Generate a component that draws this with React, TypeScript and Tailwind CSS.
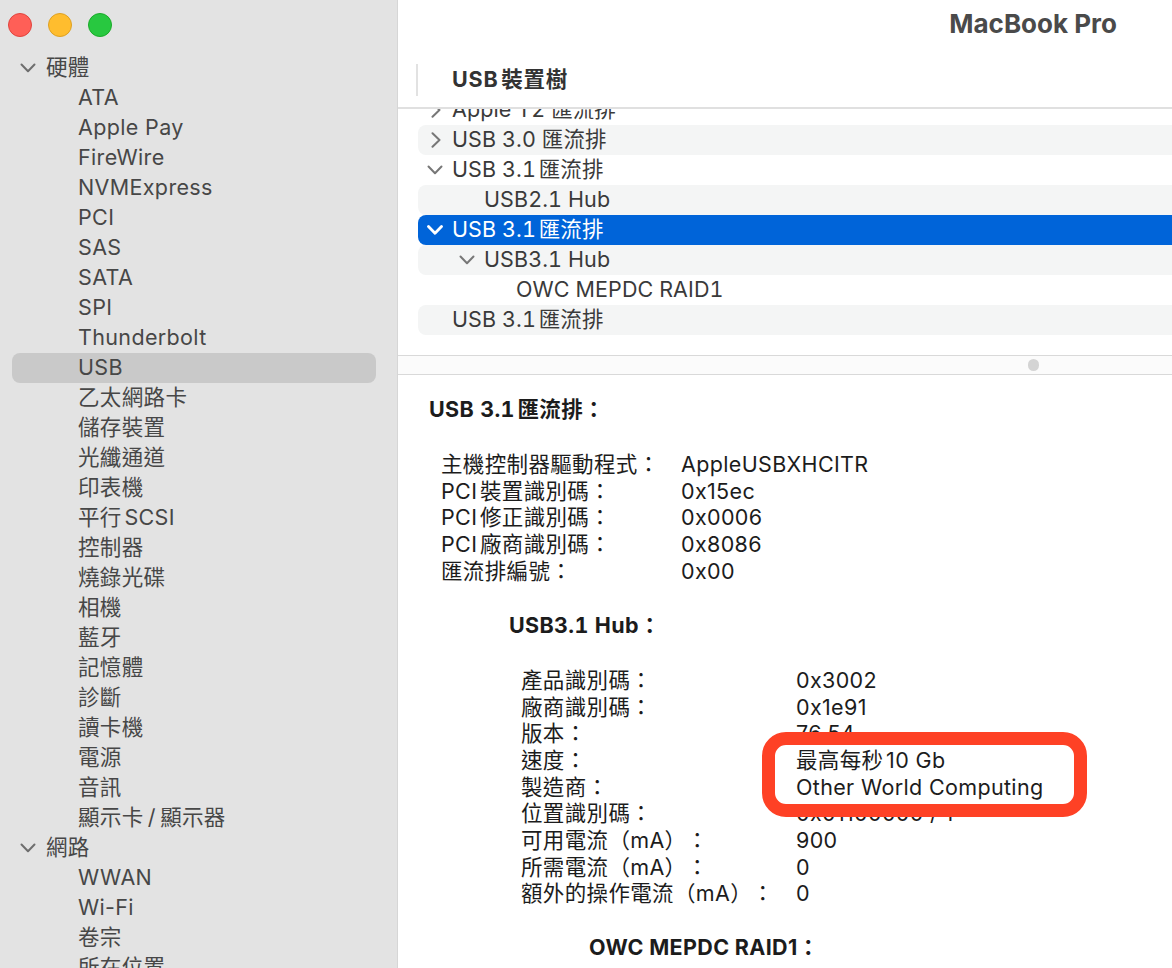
const FONT = "[font-family:Inter,'Noto_Sans_CJK_TC',sans-serif]";

const hardware = ['ATA', 'Apple Pay', 'FireWire', 'NVMExpress', 'PCI', 'SAS', 'SATA', 'SPI', 'Thunderbolt', 'USB', '乙太網路卡', '儲存裝置', '光纖通道', '印表機', '平行SCSI', '控制器', '燒錄光碟', '相機', '藍牙', '記憶體', '診斷', '讀卡機', '電源', '音訊', '顯示卡\u2009/\u2009顯示器'];
const network = ['WWAN', 'Wi-Fi', '卷宗', '所在位置'];

const treeRows = [
  { label: 'Apple T2 匯流排', level: 0, arrow: 'right' },
  { label: 'USB 3.0 匯流排', level: 0, arrow: 'right', stripe: true },
  { label: 'USB 3.1匯流排', level: 0, arrow: 'down' },
  { label: 'USB2.1 Hub', level: 1, stripe: true },
  { label: 'USB 3.1匯流排', level: 0, arrow: 'down', selected: true },
  { label: 'USB3.1 Hub', level: 1, arrow: 'down', stripe: true },
  { label: 'OWC MEPDC RAID1', level: 2 },
  { label: 'USB 3.1匯流排', level: 0, stripe: true },
];

const busInfo = [
  ['主機控制器驅動程式：', 'AppleUSBXHCITR'],
  ['PCI裝置識別碼：', '0x15ec'],
  ['PCI修正識別碼：', '0x0006'],
  ['PCI廠商識別碼：', '0x8086'],
  ['匯流排編號：', '0x00'],
];

const hubInfo = [
  ['產品識別碼：', '0x3002'],
  ['廠商識別碼：', '0x1e91'],
  ['版本：', '76.54'],
  ['速度：', '最高每秒10 Gb'],
  ['製造商：', 'Other World Computing'],
  ['位置識別碼：', '0x01100000 / 1'],
  ['可用電流（mA）：', '900'],
  ['所需電流（mA）：', '0'],
  ['額外的操作電流（mA）：', '0'],
];

function ChevronDown({ className }: { className: string }) {
  return (
    <svg viewBox="0 0 16 10" className={className} fill="none" stroke="currentColor" strokeWidth="2" strokeLinecap="round" strokeLinejoin="round">
      <path d="M1.5 1.5 8 8.2l6.5-6.7" />
    </svg>
  );
}

function ChevronRight({ className }: { className: string }) {
  return (
    <svg viewBox="0 0 10 16" className={className} fill="none" stroke="currentColor" strokeWidth="2" strokeLinecap="round" strokeLinejoin="round">
      <path d="M1.5 1.2 8.5 8l-7 6.8" />
    </svg>
  );
}

function SidebarGroup({ title, items }: { title: string; items: string[] }) {
  return (
    <>
      <div className="flex h-[30px] items-center pl-[20px] leading-[28px]">
        <ChevronDown className="h-[10px] w-[16px] text-[#6e6e6e]" />
        <span className="mb-[2px] ml-[10px]">{title}</span>
      </div>
      {items.map((item) => (
        <div
          key={item}
          className={`ml-[12px] mr-[21px] h-[30px] rounded-[8px] pl-[66px] leading-[28px] ${item === 'USB' ? 'bg-[#c9c9c9]' : ''}`}
        >
          {item}
        </div>
      ))}
    </>
  );
}

function TreeRow({ row }: { row: (typeof treeRows)[number] }) {
  const bg = row.selected ? 'bg-[#0064d9] text-white' : row.stripe ? 'bg-[#f4f5f5] text-[#3a3a3a]' : 'text-[#3a3a3a]';
  const indent = row.level === 2 ? 'pl-[64px]' : row.level === 1 ? 'pl-[32px]' : '';
  return (
    <div className={`flex h-[30px] items-center rounded-l-[8px] leading-[28px] ${bg} ${indent}`}>
      <div className={`flex w-[34px] shrink-0 items-center justify-center ${row.selected ? 'text-white [&_path]:[stroke-width:2.8]' : 'text-[#777777]'}`}>
        {row.arrow === 'down' && <ChevronDown className="h-[10px] w-[16px]" />}
        {row.arrow === 'right' && <ChevronRight className="ml-[2px] h-[16px] w-[10px]" />}
      </div>
      <span className="mb-[2px] tracking-[0.1px] tabular-nums">{row.label}</span>
    </div>
  );
}

function InfoRows({ rows, labelWidth }: { rows: string[][]; labelWidth: string }) {
  return (
    <div>
      {rows.map(([label, value]) => (
        <div key={label} className="flex h-[26.67px] items-center leading-[26.67px]">
          <div className={`shrink-0 ${labelWidth}`}>{label}</div>
          <div>{value}</div>
        </div>
      ))}
    </div>
  );
}

export default function App() {
  return (
    <div className={`flex h-[968px] w-[1172px] overflow-hidden bg-white text-[21.5px] tracking-[0.35px] [text-autospace:normal] [text-spacing-trim:space-all] ${FONT}`}>
      {/* Sidebar */}
      <aside className="h-full w-[398px] shrink-0 overflow-hidden border-r border-[#d6d6d6] bg-[#e3e3e3] text-[#474747]">
        <div className="flex h-[53px] items-start gap-[16px] pl-[8px] pt-[13px]">
          <div className="h-[24px] w-[24px] rounded-full border border-[#e0443e] bg-[#ff5f57]" />
          <div className="h-[24px] w-[24px] rounded-full border border-[#dea123] bg-[#ffbd2e]" />
          <div className="h-[24px] w-[24px] rounded-full border border-[#1aab29] bg-[#28c840]" />
        </div>
        <SidebarGroup title="硬體" items={hardware} />
        <SidebarGroup title="網路" items={network} />
      </aside>

      {/* Main */}
      <main className="relative min-w-0 flex-1">
        <div className="flex h-[53px] items-start justify-end pr-[55px]">
          <span className="text-[26px] font-bold leading-[48px] tracking-normal text-[#4a4a4a]">MacBook Pro</span>
        </div>
        <div className="flex h-[54px] items-center pl-[18px]">
          <div className="h-[32px] w-[2px] bg-[#e2e2e2]" />
          <span className="mb-[2px] ml-[34px] font-bold tracking-[0.8px] text-[#333333]">USB裝置樹</span>
        </div>
        <div className="h-[248px] overflow-hidden border-t-2 border-[#e0e0e0] pl-[20px]">
          <div className="-mt-[14px]">
            {treeRows.map((row, i) => (
              <TreeRow key={i} row={row} />
            ))}
          </div>
        </div>
        <div className="flex h-[20px] items-center border-y border-[#d9d9d9] bg-[#fbfbfb] pl-[630px]">
          <div className="h-[12px] w-[11px] rounded-full bg-[#d4d4d4]" />
        </div>

        {/* Details */}
        <div className="pl-[31px] pt-[21px] text-[#1c1c1c]">
          <div className="h-[26.67px] font-bold leading-[26.67px] tabular-nums">USB 3.1匯流排：</div>
          <div className="ml-[12px] mt-[28.4px]">
            <InfoRows rows={busInfo} labelWidth="w-[240px]" />
          </div>
          <div className="ml-[80px] mt-[27.4px] h-[26.67px] font-bold leading-[26.67px] tabular-nums">USB3.1 Hub：</div>
          <div className="ml-[92px] mt-[28.7px]">
            <InfoRows rows={hubInfo} labelWidth="w-[275px]" />
          </div>
          <div className="ml-[160px] mt-[26.7px] h-[26.67px] font-bold leading-[26.67px]">OWC MEPDC RAID1：</div>
        </div>

        {/* Annotation */}
        <div className="absolute left-[364px] top-[732px] h-[85px] w-[325px] rounded-[24px] border-[13px] border-[#fe4125]" />
      </main>
    </div>
  );
}
